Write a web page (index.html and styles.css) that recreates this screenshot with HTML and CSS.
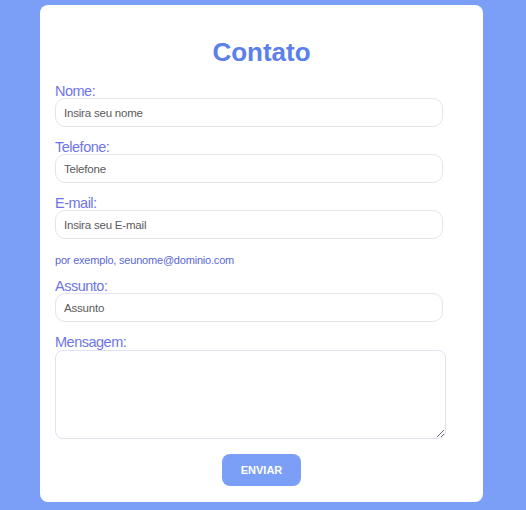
FILE: index.html
```html
<!DOCTYPE html>
<html lang="pt">
<head>
<meta charset="utf-8">
<link rel="stylesheet" href="styles.css">
</head>
<body>
<div class="card">
  <h1 class="title">Contato</h1>
  <form class="form">
    <label class="label">Nome:</label>
    <input class="field" type="text" placeholder="Insira seu nome">
    <label class="label">Telefone:</label>
    <input class="field" type="text" placeholder="Telefone">
    <label class="label">E-mail:</label>
    <input class="field" type="text" placeholder="Insira seu E-mail">
    <p class="hint">por exemplo, seunome@dominio.com</p>
    <label class="label">Assunto:</label>
    <input class="field" type="text" placeholder="Assunto">
    <label class="label">Mensagem:</label>
    <textarea class="area"></textarea>
    <div class="actions"><button class="btn" type="button">ENVIAR</button></div>
  </form>
</div>
</body>
</html>
```
FILE: styles.css
```css
html, body { margin: 0; padding: 0; }
body {
  background: #7b9ff7;
  font-family: "Liberation Sans", Arial, sans-serif;
  height: 510px;
  overflow: hidden;
  padding: 5px 0 0 40px;
  box-sizing: border-box;
}
.card {
  width: 443px;
  height: 497px;
  box-sizing: border-box;
  background: #fff;
  border-radius: 8px;
  padding: 32px 0 0 15px;
}
.title {
  margin: 0 0 14px 0;
  text-align: center;
  padding-right: 15px;
  font-size: 26px;
  line-height: 30px;
  font-weight: bold;
  color: #5b80ea;
}
.form { display: flex; flex-direction: column; align-items: flex-start; }
.label {
  display: block;
  font-size: 14.5px;
  line-height: 13px;
  padding-top: 4px;
  letter-spacing: -0.5px;
  color: #6f75e6;
  margin: 0;
}
.field {
  width: 388px;
  height: 29px;
  box-sizing: border-box;
  border: 1px solid #e3e3f3;
  border-radius: 10px;
  padding: 0 8px;
  margin: 0 0 10px 0;
  font-family: "Liberation Sans", Arial, sans-serif;
  font-size: 11.5px;
  letter-spacing: -0.2px;
  color: #444;
  background: #fff;
  outline: none;
}
.field::placeholder { color: #5a5a5a; }
.hint {
  margin: 4px 0 9px 0;
  font-family: "Liberation Sans", Arial, sans-serif;
  font-size: 11px;
  line-height: 14px;
  letter-spacing: -0.2px;
  color: #5a68d6;
}
.area {
  width: 391px;
  height: 89px;
  box-sizing: border-box;
  border: 1px solid #dfe3ef;
  border-radius: 8px;
  margin: 1px 0 0 0;
  resize: vertical;
  outline: none;
}
.actions {
  width: 413px;
  display: flex;
  justify-content: center;
  margin-top: 15px;
}
.btn {
  width: 79px;
  height: 32px;
  border: none;
  border-radius: 8px;
  background: #7b9ff7;
  color: #fff;
  font-family: "Liberation Sans", Arial, sans-serif;
  font-weight: bold;
  font-size: 11px;
  cursor: pointer;
}
```
